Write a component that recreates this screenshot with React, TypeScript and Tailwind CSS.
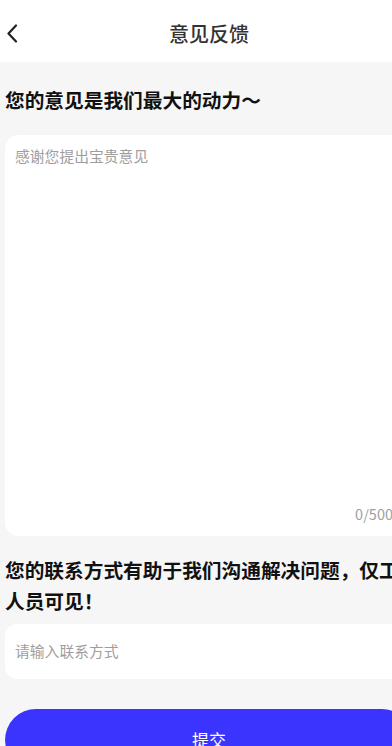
import React, { useState } from 'react';

const ChevronLeft = () => (
  <svg width="12" height="19" viewBox="0 0 12 19" fill="none">
    <path d="M10 1.5 2.5 9.5 10 17.5" stroke="#222" strokeWidth="2.2" strokeLinecap="round" strokeLinejoin="round" />
  </svg>
);

export default function App() {
  const [content, setContent] = useState('');
  const [contact, setContact] = useState('');

  return (
    <div
      className="w-[418px] min-h-[746px] bg-[#f6f6f6] text-[#111]"
      style={{ fontFamily: '"Noto Sans CJK SC", "Noto Sans", sans-serif' }}
    >
      <header className="grid h-[62px] grid-cols-[1fr_auto_1fr] items-center bg-white pt-[5px]">
        <button className="flex h-full w-[40px] items-center pl-[6px]">
          <ChevronLeft />
        </button>
        <h1 className="text-[20px] font-medium text-[#333]">意见反馈</h1>
        <div />
      </header>

      <main className="px-[5px]">
        <h2 className="pt-[24px] text-[19.7px] font-bold leading-[28px]">您的意见是我们最大的动力～</h2>

        <div className="mt-[21px] flex h-[401px] flex-col rounded-[14px] bg-white px-[10px] pt-[11px] pb-[12px]">
          <textarea
            value={content}
            maxLength={500}
            onChange={(e) => setContent(e.target.value)}
            placeholder="感谢您提出宝贵意见"
            className="flex-1 resize-none bg-transparent text-[14.8px] leading-[20px] outline-none placeholder:text-[#9e9e9e]"
          />
          <div className="pr-[10px] text-right text-[14.5px] leading-[20px] text-[#9e9e9e]">{content.length}/500</div>
        </div>

        <h2 className="mt-[18px] whitespace-nowrap text-[19.7px] font-bold leading-[31px]">
          您的联系方式有助于我们沟通解决问题，仅工作
          <br />
          人员可见！
        </h2>

        <div className="mt-[8px] flex h-[55px] items-center rounded-[12px] bg-white px-[10px]">
          <input
            value={contact}
            onChange={(e) => setContact(e.target.value)}
            placeholder="请输入联系方式"
            className="w-full bg-transparent text-[14.8px] outline-none placeholder:text-[#9e9e9e]"
          />
        </div>

        <button className="mt-[30px] flex h-[62px] w-full items-center justify-center rounded-full bg-[#3b34ff] text-[17px] text-white">
          提交
        </button>
      </main>
    </div>
  );
}
